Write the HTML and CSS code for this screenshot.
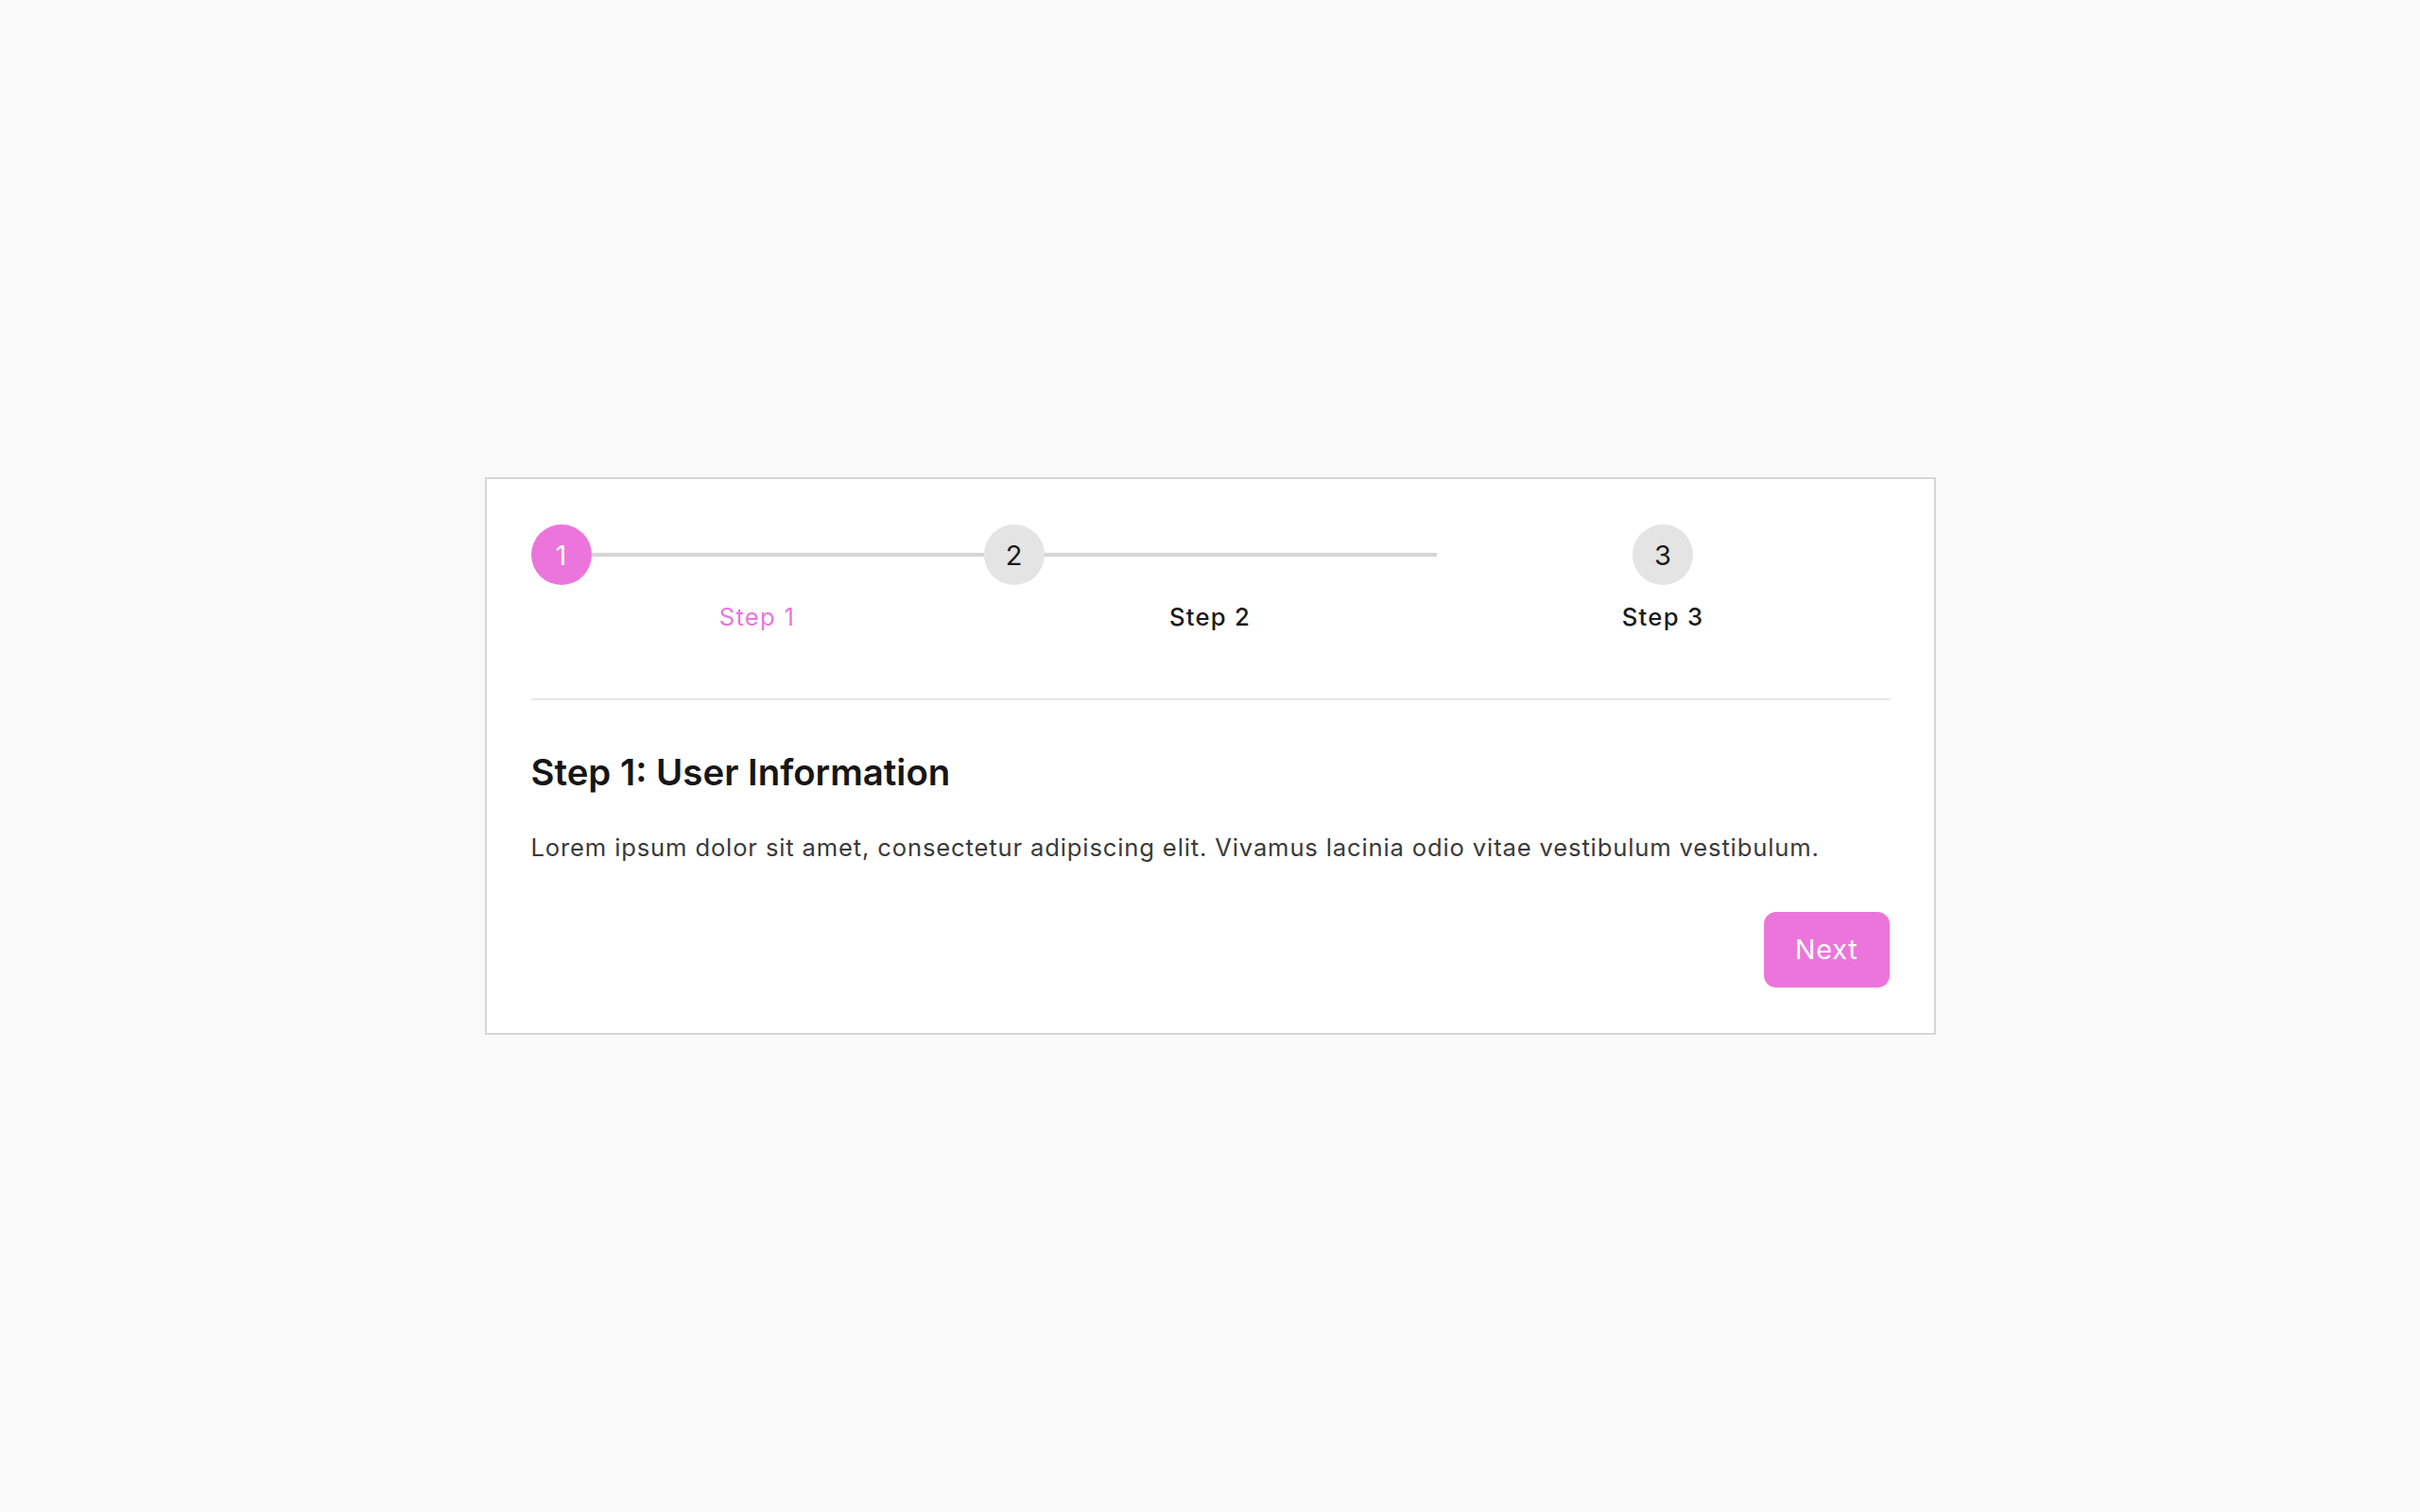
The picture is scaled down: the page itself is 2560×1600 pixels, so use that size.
FILE: index.html
```html
<!DOCTYPE html>
<html lang="en">

<head>
  <meta charset="UTF-8">
  <meta name="viewport" content="width=device-width, initial-scale=1.0">
  <title>Wizard</title>
  <link rel="stylesheet" href="styles.css">
</head>

<body>

  <div class="wizard">
    <div class="stepper">
      <div class="step active">
        <div class="step-head">
          <span class="circle">1</span>
          <span class="bar"></span>
        </div>
        <p class="step-label">Step 1</p>
      </div>
      <div class="step">
        <div class="step-head">
          <span class="circle">2</span>
          <span class="bar"></span>
        </div>
        <p class="step-label">Step 2</p>
      </div>
      <div class="step last">
        <div class="step-head">
          <span class="circle">3</span>
        </div>
        <p class="step-label">Step 3</p>
      </div>
    </div>

    <div class="step-content">
      <h2>Step 1: User Information</h2>
      <p>Lorem ipsum dolor sit amet, consectetur adipiscing elit. Vivamus lacinia odio vitae vestibulum vestibulum.</p>
    </div>

    <div class="actions">
      <button class="next-btn">Next</button>
    </div>
  </div>

</body>

</html>
```

FILE: styles.css
```css
* {
  margin: 0;
  padding: 0;
  box-sizing: border-box;
}

body {
  background: #f9f9f9;
  font-family: Inter, "Noto Sans", sans-serif;
  min-height: 100vh;
  display: flex;
  justify-content: center;
  align-items: center;
}

.wizard {
  width: 1535px;
  background: #fff;
  border: 2px solid #d6d6d6;
  padding: 48px 47px;
}

.stepper {
  display: grid;
  grid-template-columns: repeat(3, 1fr);
  padding-bottom: 66px;
  border-bottom: 2px solid #e6e6e6;
}

.step-head {
  display: flex;
  align-items: center;
}

.step.last .step-head {
  justify-content: center;
}

.circle {
  width: 64px;
  height: 64px;
  flex-shrink: 0;
  border-radius: 50%;
  background: #e4e4e4;
  color: #1a1a1a;
  font-size: 29px;
  display: flex;
  justify-content: center;
  align-items: center;
}

.bar {
  flex: 1;
  height: 4px;
  background: #d4d4d4;
}

.step.active .circle {
  background: #ec75db;
  color: #fff;
}

.step-label {
  margin-top: 15px;
  text-align: center;
  font-size: 25.6px;
  line-height: 38.4px;
  font-weight: 500;
  letter-spacing: 1.3px;
  color: #1a1a1a;
}

.step.active .step-label {
  color: #ec75db;
  font-weight: 400;
}

.step-content h2 {
  margin-top: 53px;
  font-size: 38.4px;
  font-weight: 600;
  color: #161616;
}

.step-content p {
  margin-top: 38px;
  font-size: 25.6px;
  line-height: 38.4px;
  letter-spacing: 0.85px;
  color: #3a3a3a;
}

.actions {
  display: flex;
  justify-content: flex-end;
  margin-top: 49px;
}

.next-btn {
  font-family: Inter, "Noto Sans", sans-serif;
  font-size: 28.8px;
  line-height: 44px;
  letter-spacing: 0.8px;
  padding: 18px 33px;
  background: #ec75db;
  color: #fff;
  border: none;
  border-radius: 13px;
}
```
